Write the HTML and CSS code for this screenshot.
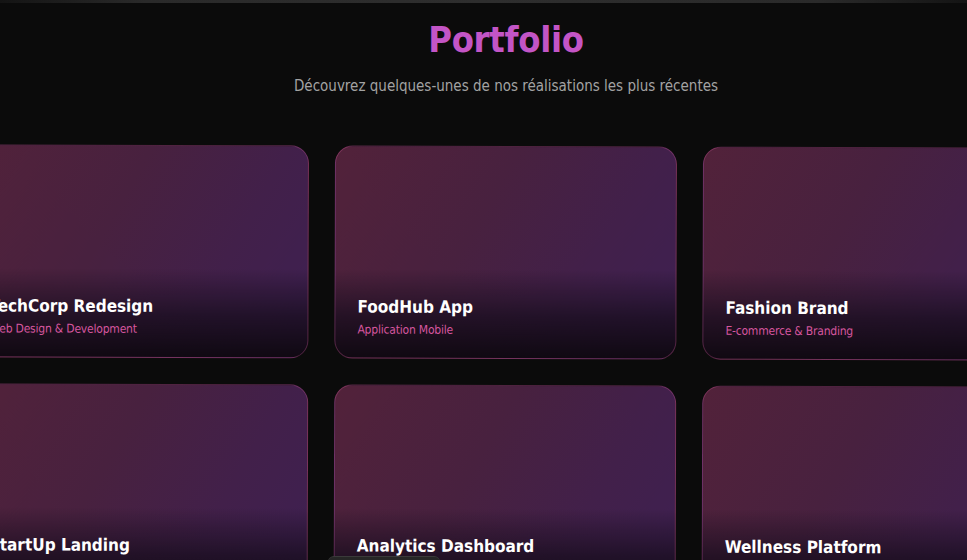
FILE: index.html
```html
<!DOCTYPE html>
<html lang="fr">
<head>
<meta charset="utf-8">
<title>Portfolio</title>
<link rel="stylesheet" href="styles.css">
</head>
<body>
<div class="topline"></div>
<section class="portfolio">
  <div class="wrap">
    <h1 class="title">Portfolio</h1>
    <p class="lead">Découvrez quelques-unes de nos réalisations les plus récentes</p>
    <div class="grid">
      <article class="card"><div class="card-body"><h3 class="card-title">TechCorp Redesign</h3><p class="card-sub">Web Design &amp; Development</p></div></article>
      <article class="card"><div class="card-body"><h3 class="card-title">FoodHub App</h3><p class="card-sub">Application Mobile</p></div></article>
      <article class="card"><div class="card-body"><h3 class="card-title">Fashion Brand</h3><p class="card-sub">E-commerce &amp; Branding</p></div></article>
      <article class="card"><div class="card-body"><h3 class="card-title">StartUp Landing</h3><p class="card-sub">Landing Page</p></div></article>
      <article class="card"><div class="card-body"><h3 class="card-title">Analytics Dashboard</h3><p class="card-sub">Web Application</p></div></article>
      <article class="card"><div class="card-body"><h3 class="card-title">Wellness Platform</h3><p class="card-sub">Plateforme Web</p></div></article>
    </div>
  </div>
</section>
<div class="peek"></div>
</body>
</html>
```
FILE: styles.css
```css
html, body {
  margin: 0;
  padding: 0;
  background: #0b0b0b;
  overflow: hidden;
  height: 560px;
}
body {
  font-family: "DejaVu Sans Condensed", "DejaVu Sans", sans-serif;
  font-stretch: semi-condensed;
  position: relative;
}
.topline {
  height: 3px;
  background: linear-gradient(90deg, #141414 0%, #2a2a2a 15%, #2e2e2e 50%, #2a2a2a 85%, #141414 100%);
}
.portfolio {
  padding-top: 15px;
}
.wrap {
  width: 1078px;
  margin-left: -33px;
  text-align: center;
}
.title {
  margin: 0;
  font-size: 36px;
  letter-spacing: -0.3px;
  line-height: 1.2;
  font-weight: bold;
  color: #c355c6;
}
.lead {
  margin: 13px 0 48px;
  font-size: 15px;
  line-height: 24px;
  color: #a3a3a3;
}
.grid {
  display: grid;
  grid-template-columns: repeat(3, 342px);
  grid-auto-rows: 213px;
  gap: 26px;
  text-align: left;
  transform: rotate(0.18deg);
  transform-origin: 50% 0;
}
.card {
  position: relative;
  border-radius: 18px;
  border: 1px solid rgba(210, 90, 160, 0.32);
  background:
    linear-gradient(to top, rgba(14, 8, 16, 0.97) 0%, rgba(22, 12, 28, 0.72) 20%, rgba(40, 20, 50, 0) 42%),
    linear-gradient(120deg, #52223a 0%, #48213f 40%, #42204a 70%, #3e2052 100%);
  display: flex;
  flex-direction: column;
  justify-content: flex-end;
  overflow: hidden;
}
.card-body {
  padding: 0 22px 19px;
}
.card-title {
  margin: 0;
  font-size: 17px;
  line-height: 22px;
  font-weight: bold;
  color: #ffffff;
}
.card-sub {
  margin: 3px 0 0;
  font-size: 12px;
  letter-spacing: -0.2px;
  line-height: 18px;
  color: #d6569f;
}
.peek {
  position: absolute;
  left: 328px;
  top: 556px;
  width: 112px;
  height: 10px;
  border-radius: 6px 6px 0 0;
  background: #262626;
  border-top: 1px solid #3a3a3a;
}
```
